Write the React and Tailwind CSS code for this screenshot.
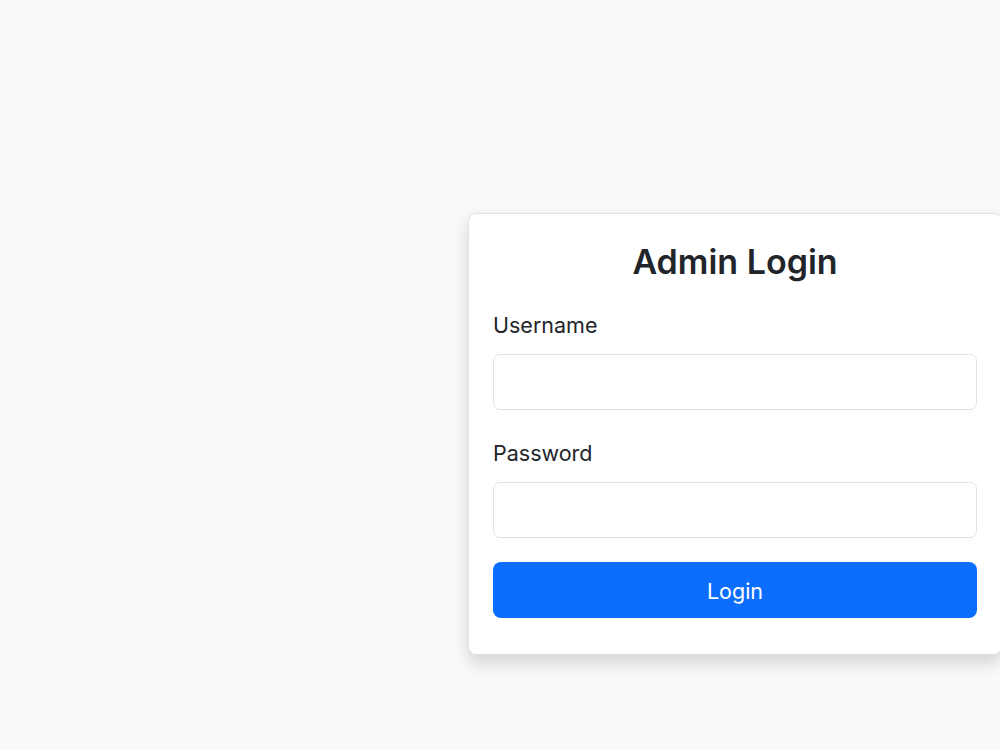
export default function App() {
  return (
    <div
      className="min-h-screen bg-[#f8f9fa] pt-[213px] flex justify-end overflow-hidden text-[#212529]"
      style={{ fontFamily: "Inter, 'Noto Sans', sans-serif" }}
    >
      <div className="w-[534px] shrink-0 -mr-[2px] h-fit bg-white border border-[#dee2e6] rounded-lg shadow-[0_8px_16px_rgba(0,0,0,0.15)] px-6 pt-[27px] pb-9">
        <h2 className="text-[34px] leading-[42px] font-semibold text-center">Admin Login</h2>
        <form className="mt-[27px]" onSubmit={(e) => e.preventDefault()}>
          <label htmlFor="username" className="block text-[21.5px] leading-[30px] mb-[14px]">
            Username
          </label>
          <input
            id="username"
            type="text"
            className="block w-full h-[56px] border border-[#dee2e6] rounded-[7px] px-4 text-[20px] outline-none"
          />
          <label htmlFor="password" className="block text-[21.5px] leading-[30px] mt-[28px] mb-[14px]">
            Password
          </label>
          <input
            id="password"
            type="password"
            className="block w-full h-[56px] border border-[#dee2e6] rounded-[7px] px-4 text-[20px] outline-none"
          />
          <button
            type="submit"
            className="block w-full h-[56px] mt-6 pt-[3px] bg-[#0d6efd] text-white rounded-lg text-[21.5px]"
          >
            Login
          </button>
        </form>
      </div>
    </div>
  );
}
